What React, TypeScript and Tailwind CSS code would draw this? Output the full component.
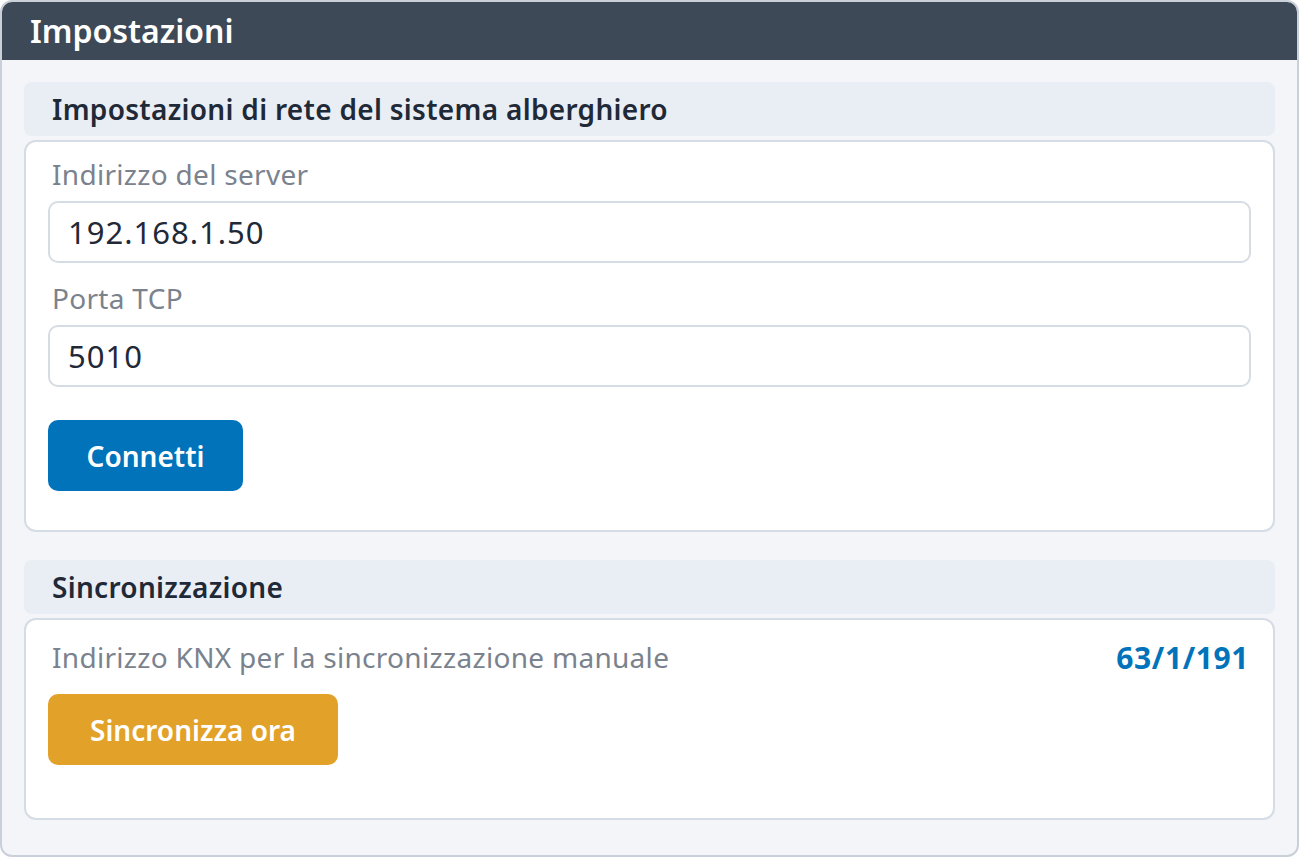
import React from "react";

const font = { fontFamily: '"Noto Sans", "Open Sans", sans-serif' };

function SectionHeader({ title }: { title: string }) {
  return (
    <div className="h-[54px] flex items-center px-[28px] bg-[#e9eef5] rounded-[8px]">
      <span className="text-[28px] leading-[36px] font-semibold tracking-[0.3px] text-[#1f2937]">{title}</span>
    </div>
  );
}

function Field({ label, value }: { label: string; value: string }) {
  return (
    <div className="flex flex-col">
      <span className="text-[28px] leading-[36px] tracking-[0.3px] text-[#7a828e] pl-[4px]">{label}</span>
      <div className="mt-[9px] h-[62px] border-2 border-[#d6dce4] rounded-[10px] flex items-center px-[18px]">
        <span className="text-[31px] leading-[40px] tracking-[1px] text-[#1f2937]">{value}</span>
      </div>
    </div>
  );
}

export default function App() {
  return (
    <div style={font} className="w-[1299px] h-[857px] bg-[#f3f5f8] border-2 border-[#c9d0da] rounded-[12px] overflow-hidden flex flex-col">
      <div className="h-[58px] shrink-0 bg-[#3e4957] flex items-center pl-[28px]">
        <span className="text-[32px] leading-[40px] font-semibold text-white">Impostazioni</span>
      </div>

      <div className="flex flex-col px-[22px] pt-[22px]">
        {/* rete */}
        <SectionHeader title="Impostazioni di rete del sistema alberghiero" />
        <div className="mt-[4px] h-[392px] bg-white border-2 border-[#d5dce5] rounded-[12px] px-[22px] pt-[14px] flex flex-col">
          <Field label="Indirizzo del server" value="192.168.1.50" />
          <div className="mt-[17px]">
            <Field label="Porta TCP" value="5010" />
          </div>
          <button className="mt-[33px] w-[195px] h-[71px] bg-[#0073bb] rounded-[10px] text-white text-[28px] font-semibold">
            Connetti
          </button>
        </div>

        {/* sincronizzazione */}
        <div className="mt-[28px]">
          <SectionHeader title="Sincronizzazione" />
        </div>
        <div className="mt-[4px] h-[202px] bg-white border-2 border-[#d5dce5] rounded-[12px] px-[22px] pt-[19px] flex flex-col">
          <div className="flex items-center justify-between h-[36px] pl-[4px] pr-[2px]">
            <span className="text-[28px] tracking-[0.3px] text-[#7a828e]">Indirizzo KNX per la sincronizzazione manuale</span>
            <span className="text-[30px] font-bold tracking-[0.6px] text-[#0073bb]">63/1/191</span>
          </div>
          <button className="mt-[19px] w-[290px] h-[71px] bg-[#e2a229] rounded-[10px] text-white text-[28px] font-semibold">
            Sincronizza ora
          </button>
        </div>
      </div>
    </div>
  );
}
